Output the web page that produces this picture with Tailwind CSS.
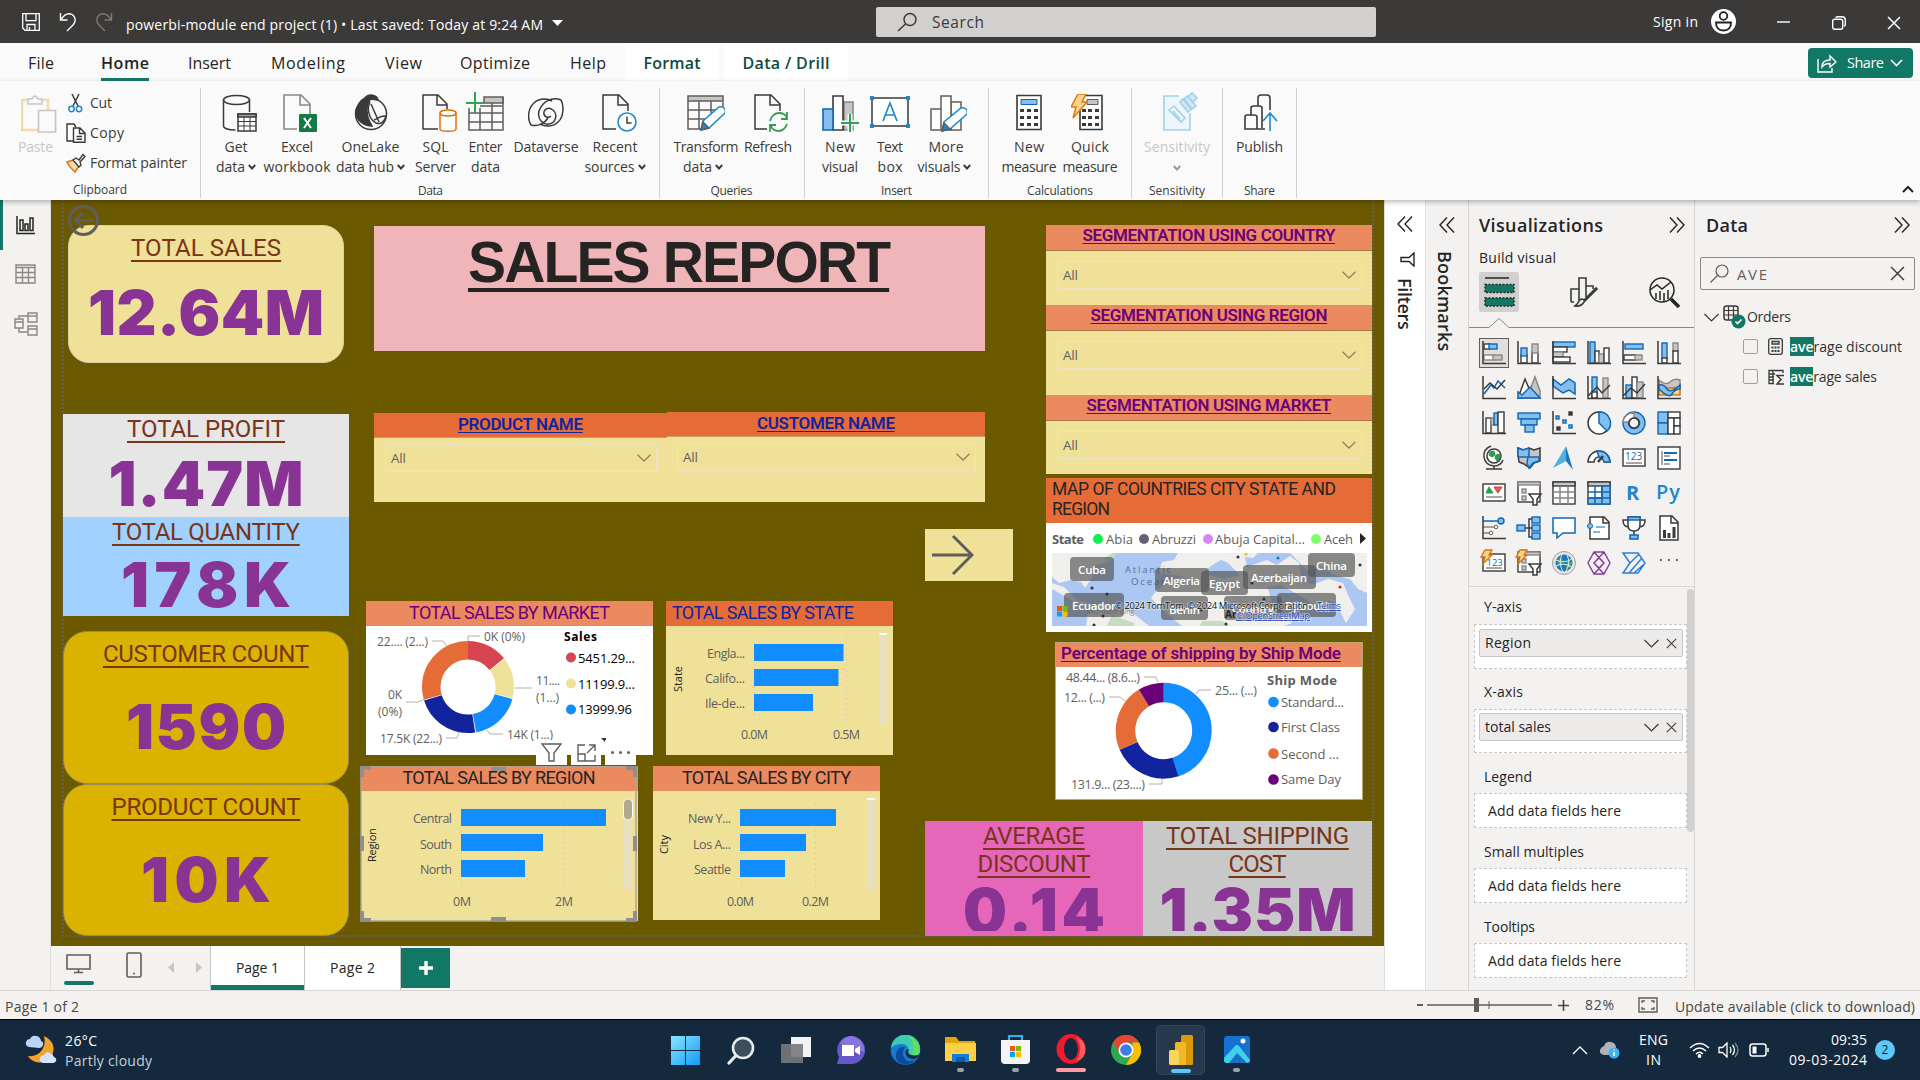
<!DOCTYPE html>
<html lang="en">
<head>
<meta charset="utf-8">
<title>powerbi-module end project (1)</title>
<script src="https://cdn.jsdelivr.net/npm/@tailwindcss/browser@4"></script>
</head>
<body class="w-[1920px] h-[1080px] overflow-hidden flex flex-col bg-[#f3f2f1] text-[#323130] font-['Open_Sans','Noto_Sans',sans-serif] text-[14px] leading-5 whitespace-nowrap">

<!-- Title bar -->
<header class="h-[43px] shrink-0 bg-[#3b3a39] text-white flex items-center">
  <svg class="ml-[22px] w-[18px] h-[18px]" viewBox="0 0 18 18" fill="none" stroke="#fff" stroke-width="1.3"><path d="M.7.7h16.6v16.6H3L.7 15zM4 .7v7h10v-7M5 17v-5.5h8V17M7.5 14v3"/></svg>
  <svg class="ml-[19px] w-[18px] h-[20px]" viewBox="0 0 18 20" fill="none" stroke="#fff" stroke-width="1.4"><path d="M1.5 1v7h7M2 7.5C5 3 9 .5 13 2.500c4 2.500 4 7.500 1 10.500L8 19"/></svg>
  <svg class="ml-[18px] w-[18px] h-[20px]" viewBox="0 0 18 20" fill="none" stroke="#7d7b79" stroke-width="1.400"><path d="M16.500 1v7h-7M16 7.500C13 3 9 .500 5 2.500c-4 2.500-4 7.500-1 10.500l6 6"/></svg>
  <div class="ml-[13px] mt-[6px] w-[419px] text-[14px]"><span data-w="417">powerbi-module end project (1) • Last saved: Today at 9:24 AM</span></div>
  <svg class="ml-[7px] mt-[3px] w-[11px] h-[6px]" viewBox="0 0 11 6"><path d="M0 0h11L5.500 6z" fill="#fff"/></svg>
  <div class="ml-[313px] w-[500px] h-[30px] bg-[#d2d0ce] rounded-[2px] flex items-center text-[#3b3a39] text-[15.500px]">
    <svg class="ml-[21px] w-[21px] h-[20px]" viewBox="0 0 21 20" fill="none" stroke="#3b3a39" stroke-width="1.500"><circle cx="13" cy="7.500" r="6"/><path d="M8.500 12L1 19"/></svg>
    <span class="ml-[14px]" data-w="52">Search</span>
  </div>
  <div class="ml-[277px] w-[46px] text-[14px]"><span data-w="45">Sign in</span></div>
  <svg class="ml-[12px] w-[25px] h-[25px]" viewBox="0 0 25 25"><circle cx="12.500" cy="12.500" r="12.500" fill="#fff"/><g fill="none" stroke="#222" stroke-width="1.800"><circle cx="12.500" cy="7" r="3.800"/><path d="M5 13.500h15c0 5-2.500 8-7.500 8s-7.500-3-7.500-8z"/></g></svg>
  <svg class="ml-[41px] w-[13px] h-[13px]" viewBox="0 0 13 13"><path d="M0 7h13" stroke="#fff" stroke-width="1.400"/></svg>
  <svg class="ml-[42px] mt-[2px] w-[14px] h-[14px]" viewBox="0 0 14 14" fill="none" stroke="#fff" stroke-width="1.400"><rect x=".7" y="3.300" width="10" height="10" rx="2"/><path d="M3.500 1.500Q4.500.700 6 .700h4q3.300 0 3.300 3.300v4q0 1.500-1 2.500"/></svg>
  <svg class="ml-[41px] mt-[2px] w-[14px] h-[14px]" viewBox="0 0 14 14"><path d="M1 1l12 12M13 1L1 13" stroke="#fff" stroke-width="1.500"/></svg>
</header>

<!-- Ribbon tabs -->
<nav class="h-[38px] shrink-0 bg-[#fafafa] flex text-[16px] text-[#252423]">
  <div class="ml-[28px] w-[73px] pt-[10px]"><span data-w="26">File</span></div>
  <div class="w-[87px] pt-[10px]"><div class="w-[48px] h-[28px] border-b-3 border-[#117865] font-semibold"><span data-w="48">Home</span></div></div>
  <div class="w-[83px] pt-[10px]"><span data-w="43">Insert</span></div>
  <div class="w-[114px] pt-[10px]"><span data-w="74">Modeling</span></div>
  <div class="w-[75px] pt-[10px]"><span data-w="37">View</span></div>
  <div class="w-[110px] pt-[10px]"><span data-w="70">Optimize</span></div>
  <div class="w-[55px] pt-[10px]"><span data-w="36">Help</span></div>
  <div class="w-[94px] bg-white flex justify-center pt-[10px] font-semibold text-[#0c4c40]"><span data-w="57">Format</span></div>
  <div class="ml-[5px] w-[124px] bg-white flex justify-center pt-[10px] font-semibold text-[#0c4c40]"><span data-w="87">Data / Drill</span></div>
  <div class="ml-[960px] mt-[5px] w-[105px] h-[30px] rounded-[4px] bg-[#117865] text-white text-[14.500px] flex items-center">
    <svg class="ml-[9px] w-[20px] h-[19px]" viewBox="0 0 20 19" fill="none" stroke="#fff" stroke-width="1.400"><path d="M1 5v13h14v-4M5 13c0-5 3-7 8-7V2l6 6-6 5V9.500C9 9.500 7 10 5 13z"/></svg>
    <span class="ml-[10px]" data-w="37">Share</span>
    <svg class="ml-[6px] w-[13px] h-[8px]" viewBox="0 0 13 8"><path d="M1 1l5.500 5.500L12 1" stroke="#fff" stroke-width="1.600" fill="none"/></svg>
  </div>
</nav>

<!-- Ribbon -->
<section class="h-[119px] shrink-0 bg-[#fafafa] flex text-[14px] text-[#3b3a39] relative z-10 shadow-[0_2px_5px_rgba(0,0,0,0.28)]">
  <!-- Clipboard -->
  <div class="w-[200px] pt-[7px] flex flex-col">
    <div class="flex h-[92px]">
      <div class="ml-[18px] w-[48px] pt-[7px] text-[#c8c6c4]">
        <svg class="ml-[3px] w-[36px] h-[38px]" viewBox="0 0 36 38" fill="none"><path d="M1 5h26v30H1z" stroke="#f6d9ab" stroke-width="2.500"/><path d="M7 9V4h4q3-6 6 0h4v5z" fill="#fafafa" stroke="#c8c6c4" stroke-width="1.500"/><path d="M17.500 15.500h17V37h-17z" fill="#fafafa" stroke="#c8c6c4" stroke-width="1.700"/></svg>
        <div class="mt-[4px]"><span data-w="35">Paste</span></div>
      </div>
      <div class="flex flex-col gap-[10px] pt-[5px]">
        <div class="flex items-center h-5"><svg class="ml-[1px] w-[18px] h-[20px]" viewBox="0 0 18 20" fill="none"><path d="M5 1l6 12M12 1L6 13" stroke="#3b3a39" stroke-width="1.500"/><circle cx="4.500" cy="16" r="2.700" stroke="#1e87cd" stroke-width="1.500"/><circle cx="12" cy="16" r="2.700" stroke="#1e87cd" stroke-width="1.500"/></svg><span class="ml-[5px]" data-w="22">Cut</span></div>
        <div class="flex items-center h-5"><svg class="w-[20px] h-[20px]" viewBox="0 0 20 20" fill="none" stroke="#3b3a39" stroke-width="1.400"><path d="M7 18H1V1h7l2 3"/><path d="M7.500 5h6.500l5 5v9.300H7.500zM13.500 5v5.500H19M10.500 13.500h5.500M10.500 16.300h5.500"/></svg><span class="ml-[4px]" data-w="34">Copy</span></div>
        <div class="flex items-center h-5"><svg class="w-[20px] h-[20px]" viewBox="0 0 20 20" fill="none"><path d="M1 9l6-2 6 6-4 6C6 16 3 14 1 9z" fill="#f8d9ae" stroke="#d8730c" stroke-width="1.500"/><path d="M7 7l3-2 3 2 4-5.500 2 2L14 9l1 3-2 2z" fill="#fafafa" stroke="#3b3a39" stroke-width="1.400"/></svg><span class="ml-[4px]" data-w="97">Format painter</span></div>
      </div>
    </div>
    <div class="flex justify-center text-[12px] leading-[20px] mt-[1px]"><span data-w="54">Clipboard</span></div>
  </div>
  <!-- Data -->
  <div class="my-[7px] mb-[2px] w-[460px] border-l border-[#d2d0ce] pt-0">
    <div class="flex h-[92px] pt-[6px]">
      <div class="ml-[9px] w-[52px] flex flex-col items-center">
        <svg class="ml-[7px] w-[36px] h-[38px] mb-[5px]" viewBox="0 0 36 38" fill="none" stroke="#3b3a39" stroke-width="1.500"><ellipse cx="14.500" cy="6" rx="13" ry="4.500"/><path d="M1.500 6v26c0 2 4 4 12 4M27.500 6v12"/><path d="M16 20h18v17H16z" fill="#fff"/><path d="M16 20h18v3H16z" fill="#a19f9d"/><path d="M16 27.500h18M16 32h18M22 23v14M28 23v14" stroke-width="1"/></svg>
        <span data-w="23">Get</span><div class="flex items-center"><span data-w="29">data</span><svg class="ml-[3px] w-[8px] h-[6px]" viewBox="0 0 8 6"><use href="#cv"/></svg></div>
      </div>
      <div class="w-[70px] flex flex-col items-center">
        <svg class="ml-[4px] w-[36px] h-[38px] mb-[5px]" viewBox="0 0 36 38" fill="none"><path d="M16 35H3V1h17l9 9v10M19 1v10h10" stroke="#8a8886" stroke-width="1.600"/><rect x="18" y="20" width="18" height="18" rx="1" fill="#107c41"/><path d="M23 24l7 10M30 24l-7 10" stroke="#fff" stroke-width="2"/></svg>
        <span data-w="32">Excel</span><span data-w="67">workbook</span>
      </div>
      <div class="w-[77px] flex flex-col items-center">
        <svg class="w-[36px] h-[38px] mb-[5px]" viewBox="0 0 36 38" fill="none" stroke="#3b3a39" stroke-width="1.500"><circle cx="18" cy="20" r="15.500"/><path d="M12 4C16-1 24 1 25 6L18 5c-6 6-5 18 1 27-8 0-16-6-16-13S8 6 12 4z" fill="#3b3a39"/><path d="M17 8c-4 8 0 18 6 21 5 2 9-2 10-7-6-1-8 3-12 4" fill="#fafafa"/><path d="M18 10l8 18"/></svg>
        <span data-w="58">OneLake</span><div class="flex items-center"><span data-w="58">data hub</span><svg class="ml-[3px] w-[8px] h-[6px]" viewBox="0 0 8 6"><use href="#cv"/></svg></div>
      </div>
      <div class="w-[53px] flex flex-col items-center">
        <svg class="ml-[6px] w-[36px] h-[38px] mb-[5px]" viewBox="0 0 36 38" fill="none" stroke="#3b3a39" stroke-width="1.500"><path d="M17 35H2V1h15l9 9v5M16 1v10h10"/><g stroke="#d8730c" fill="#fff"><path d="M19 19v16c0 3 16 3 16 0V19"/><ellipse cx="27" cy="19" rx="8" ry="3"/></g></svg>
        <span data-w="26">SQL</span><span data-w="41">Server</span>
      </div>
      <div class="w-[47px] flex flex-col items-center">
        <svg class="mr-[2px] w-[38px] h-[38px] mb-[5px] overflow-visible" viewBox="0 0 38 38" fill="none" stroke="#605e5c" stroke-width="1.500"><path d="M18 3h19v6H18z" fill="#c8c6c4"/><path d="M3 14v22h34V3M3 19h34M3 28h34M14 14v22M26 9v27M14 12h22" /><path d="M9-2v22M0 9h18" stroke="#2ea44f" stroke-width="2"/></svg>
        <span data-w="34">Enter</span><span data-w="29">data</span>
      </div>
      <div class="w-[74px] flex flex-col items-center">
        <svg class="w-[36px] h-[38px] mb-[5px]" viewBox="0 0 36 38" fill="none" stroke="#3b3a39" stroke-width="1.500"><path d="M33 6C24 2 14 8 11 17c-2 8 4 14 10 13 7-1 9-10 4-14s-10 0-9 4 5 4 7 2M33 6c3 5 3 17-3 22-5 5-13 5-18 2M3 31c-4-6-3-17 3-22C11 4 19 4 24 7M3 31c7 2 14-2 17-7"/></svg>
        <span data-w="65">Dataverse</span>
      </div>
      <div class="ml-[-2px] w-[68px] flex flex-col items-center">
        <svg class="ml-[7px] w-[36px] h-[38px] mb-[5px]" viewBox="0 0 36 38" fill="none"><path d="M15 35H2V1h16l9 9v7M17 1v10h10" stroke="#3b3a39" stroke-width="1.500"/><circle cx="26" cy="28" r="9" fill="#fff" stroke="#1e87cd" stroke-width="1.600"/><path d="M26 22.500V29h4.500" stroke="#3b3a39" stroke-width="1.500"/></svg>
        <span data-w="45">Recent</span><div class="flex items-center"><span data-w="50">sources</span><svg class="ml-[3px] w-[8px] h-[6px]" viewBox="0 0 8 6"><use href="#cv"/></svg></div>
      </div>
    </div>
    <div class="flex justify-center text-[12px] mt-[1px]"><span data-w="25">Data</span></div>
  </div>
  <!-- Queries -->
  <div class="my-[7px] mb-[2px] w-[144px] border-l border-[#d2d0ce] -ml-px mr-px">
    <div class="flex h-[92px] pt-[6px]">
      <div class="ml-[11px] w-[70px] flex flex-col items-center">
        <svg class="w-[38px] h-[38px] mb-[5px]" viewBox="0 0 38 38" fill="none" stroke="#605e5c" stroke-width="1.500"><path d="M1 2h35v5H1z" fill="#c8c6c4"/><path d="M36 8v7M1 7v28h14M1 16h27M1 25h20M12 7v28M24 7v12"/><path d="M14 36l2-9 16-14q3-1 5 1t1 5L22 34z" fill="#fff" stroke="#1e87cd"/><path d="M14 36l2-8 6 6z" fill="#1e87cd"/></svg>
        <span data-w="65">Transform</span><div class="mr-[6px] flex items-center"><span data-w="29">data</span><svg class="ml-[3px] w-[8px] h-[6px]" viewBox="0 0 8 6"><use href="#cv"/></svg></div>
      </div>
      <div class="w-[54px] flex flex-col items-center">
        <svg class="ml-[6px] w-[34px] h-[38px] mb-[5px]" viewBox="0 0 34 38" fill="none"><path d="M13 35H1V1h16l9 9v7M16 1v10h10" stroke="#3b3a39" stroke-width="1.500"/><g stroke="#3c9b52" stroke-width="1.800"><path d="M16 27c1-5 5-8 9-8s7 2 8 5M33 18v7h-6M33 30c-1 4-5 7-8 7-4 0-7-2-8-5M16 38v-7h6"/></g></svg>
        <span data-w="48">Refresh</span>
      </div>
    </div>
    <div class="flex justify-center text-[12px] mt-[1px]"><span data-w="42">Queries</span></div>
  </div>
  <!-- Insert -->
  <div class="my-[7px] mb-[2px] w-[184px] border-l border-[#d2d0ce]">
    <div class="flex h-[92px] pt-[6px]">
      <div class="ml-[10px] w-[50px] flex flex-col items-center">
        <svg class="w-[36px] h-[38px] mb-[5px] overflow-visible" viewBox="0 0 36 38" fill="none" stroke="#3b3a39" stroke-width="1.600"><path d="M22 8h9v28h-9z" fill="#c8c6c4" stroke="#8a8886"/><path d="M11 2h10v34H11z" fill="#fff"/><path d="M1 15h10v21H1z" fill="#83beec" stroke="#1267b4"/><path d="M28 20v18M19 29h18" stroke="#fafafa" stroke-width="5"/><path d="M28 20v18M19 29h18" stroke="#2ea44f" stroke-width="2"/></svg>
        <span data-w="30">New</span><span data-w="36">visual</span>
      </div>
      <div class="w-[50px] flex flex-col items-center">
        <svg class="w-[40px] h-[38px] mb-[5px]" viewBox="0 0 40 38" fill="none"><path d="M2 4h36v28H2z" fill="#fff" stroke="#3b3a39" stroke-width="1.500"/><g fill="#1e87cd"><path d="M0 2h4v4H0zM36 2h4v4h-4zM0 30h4v4H0zM36 30h4v4h-4z"/></g><path d="M13 27l7-18 7 18M15.500 21h9" stroke="#1e87cd" stroke-width="1.700"/></svg>
        <span data-w="26">Text</span><span data-w="25">box</span>
      </div>
      <div class="w-[62px] flex flex-col items-center">
        <svg class="ml-[4px] w-[38px] h-[38px] mb-[5px]" viewBox="0 0 38 38" fill="none" stroke="#605e5c" stroke-width="1.500"><path d="M22 8h10v28H22z" fill="#fff"/><path d="M12 2h10v34H12zM2 15h10v21H2z" fill="#fff"/><path d="M13 37l2-9 17-14q3-1 5 1t1 5L21 35z" fill="#fff" stroke="#1e87cd"/><path d="M13 37l2-8 6 6z" fill="#1e87cd"/></svg>
        <span data-w="35">More</span><div class="mr-[3px] flex items-center"><span data-w="43">visuals</span><svg class="ml-[3px] w-[8px] h-[6px]" viewBox="0 0 8 6"><use href="#cv"/></svg></div>
      </div>
    </div>
    <div class="flex justify-center text-[12px] mt-[1px]"><span data-w="31">Insert</span></div>
  </div>
  <!-- Calculations -->
  <div class="my-[7px] mb-[2px] w-[143px] border-l border-[#d2d0ce]">
    <div class="flex h-[92px] pt-[6px]">
      <div class="ml-[10px] w-[60px] flex flex-col items-center">
        <svg class="w-[26px] h-[38px] mb-[5px]" viewBox="0 0 26 38"><path d="M1 1.500h24v34H1z" fill="#fff" stroke="#3b3a39" stroke-width="1.600"/><path d="M5 5.500h16v5H5z" fill="#83beec" stroke="#1267b4"/><path d="M4 15h4v3H4zM11 15h4v3h-4zM18 15h4v3h-4zM4 22h4v3H4zM11 22h4v3h-4zM18 22h4v3h-4zM4 29h4v3H4zM11 29h4v3h-4zM18 29h4v3h-4z" fill="#3b3a39"/></svg>
        <span data-w="30">New</span><span data-w="55">measure</span>
      </div>
      <div class="w-[62px] flex flex-col items-center">
        <svg class="mr-[7px] w-[32px] h-[38px] mb-[5px]" viewBox="0 0 32 38"><path d="M9 1.500h22v34H9z" fill="#fff" stroke="#3b3a39" stroke-width="1.600"/><path d="M16 5.500h11v5H16z" fill="#c8c6c4" stroke="#605e5c"/><path d="M11 15h4v3h-4zM17 15h4v3h-4zM24 15h4v3h-4zM11 22h4v3h-4zM17 22h4v3h-4zM24 22h4v3h-4zM11 29h4v3h-4zM17 29h4v3h-4zM24 29h4v3h-4z" fill="#3b3a39"/><path d="M7 0h8l-4 8h5L2 24l3-11H0z" fill="#fbd38d" stroke="#e07b0a" stroke-width="1.500"/></svg>
        <span data-w="38">Quick</span><span data-w="55">measure</span>
      </div>
    </div>
    <div class="flex justify-center text-[12px] mt-[1px]"><span data-w="66">Calculations</span></div>
  </div>
  <!-- Sensitivity -->
  <div class="my-[7px] mb-[2px] w-[91px] border-l border-[#d2d0ce]">
    <div class="flex h-[92px] pt-[6px]">
      <div class="w-[90px] flex flex-col items-center text-[#c8c6c4]">
        <svg class="ml-[5px] w-[34px] h-[38px] mb-[5px] overflow-visible" viewBox="0 0 34 38" fill="none" stroke="#a5d0ea" stroke-width="1.600"><path d="M16 2H1v34h26V19" fill="#eef6fb"/><path d="M6 16l5-4 11 12-4 4zM10 17l7 8"/><path d="M17 8l3-3 8 10-3 3zM21 5l3-3 9 10-4 3zM25 3l4-4 5 5-4 4z" fill="#d3e8f4"/></svg>
        <span data-w="66">Sensitivity</span><svg class="mt-[8px] w-[8px] h-[6px] opacity-50" viewBox="0 0 8 6"><use href="#cv"/></svg>
      </div>
    </div>
    <div class="flex justify-center text-[12px] mt-[1px]"><span data-w="56">Sensitivity</span></div>
  </div>
  <!-- Share -->
  <div class="my-[7px] mb-[2px] w-[75px] border-x border-[#d2d0ce]">
    <div class="flex h-[92px] pt-[6px]">
      <div class="w-[73px] flex flex-col items-center">
        <svg class="ml-[3px] w-[34px] h-[38px] mb-[5px]" viewBox="0 0 34 38" fill="none" stroke="#3b3a39" stroke-width="1.600"><path d="M14 12V4q0-3 3-3h6q3 0 3 3v12M7 21v-7q0-2 3-2h5q3 0 3 2v20M1 34V23q0-2 2-2h7q3 0 3 2v12H1zM13 35h8"/><path d="M26 37V19M19 27l7-8 7 8" stroke="#1e87cd"/></svg>
        <span data-w="47">Publish</span>
      </div>
    </div>
    <div class="flex justify-center text-[12px] mt-[1px]"><span data-w="31">Share</span></div>
  </div>
  <svg class="ml-auto mr-[6px] mt-[104px] w-[12px] h-[8px]" viewBox="0 0 12 8"><path d="M1 7l5-5 5 5" stroke="#252423" stroke-width="2" fill="none"/></svg>
  <svg class="hidden"><symbol id="cv" viewBox="0 0 8 6"><path d="M.8 1L4 4.500 7.200 1" stroke="#3b3a39" stroke-width="1.900" fill="none"/></symbol></svg>
</section>

<!-- Workspace -->
<main class="flex h-[790px] shrink-0">
  <aside class="w-[51px] flex flex-col border-r border-[#e1dfdd]">
    <div class="h-[50px] border-l-3 border-[#117865] pt-[16px] pl-[13px]"><svg class="w-[19px] h-[19px]" viewBox="0 0 19 19" fill="none" stroke="#252423" stroke-width="1.500"><path d="M1 0v17.500h18M4 4h3v10.500H4zM9 8h3v6.500H9zM14 2h3v12.500h-3z"/></svg></div>
    <svg class="mt-[14px] ml-[15px] w-[21px] h-[20px]" viewBox="0 0 21 20" fill="none" stroke="#8a8886" stroke-width="1.400"><path d="M1 1h19v18H1zM1 3.500h19M1 8.500h19M1 13.500h19M7.500 4v15M13.500 4v15"/></svg>
    <svg class="mt-[28px] ml-[14px] w-[24px] h-[24px]" viewBox="0 0 24 24" fill="none" stroke="#8a8886" stroke-width="1.400"><path d="M1 7h8v9H1zM1 10h8M14 1h9v9h-9zM14 4h9M14 14h9v9h-9zM14 17h9M5 7V4h9M5 16v4h9"/></svg>
  </aside>

  <div class="flex flex-col w-[1333px]">
    <!-- Report canvas -->
    <div class="relative h-[746px] bg-[#6b5900] flex">
      <div class="absolute left-[11px] right-[10px] top-0 bottom-[9px] border-2 border-t-0 border-dotted border-[#605e6a]"></div>
      <svg class="absolute z-10 left-[17px] top-[5px] w-[31px] h-[31px]" viewBox="0 0 31 31" fill="none" stroke="#605e5c" stroke-width="3"><circle cx="15.500" cy="15.500" r="14"/><path d="M25 15.500H8M15 8l-7.500 7.500L15 23"/></svg>

      <!-- KPI cards -->
      <div class="relative ml-[12px] w-[286px] flex flex-col text-center font-['Roboto',sans-serif] text-[24px] leading-[28px] text-[#7a3417]">
        <div class="mt-[25px] ml-[5px] w-[276px] h-[138px] rounded-[21px] border border-[#d8cfa8] bg-[#f0e199] pt-[8px]"><span class="underline decoration-2 underline-offset-[4px]" data-w="150">TOTAL SALES</span><div class="mt-[20px] font-['Inter',sans-serif] font-black text-[62px] leading-[62px] text-[#893395]"><span data-w="236">12.64M</span></div></div>
        <div class="mt-[51px] h-[103px] bg-[#e6e6e6] pt-[1px]"><span class="underline decoration-2 underline-offset-[4px]" data-w="158">TOTAL PROFIT</span><div class="mt-[10px] font-['Inter',sans-serif] font-black text-[62px] leading-[62px] text-[#893395]"><span data-w="195">1.47M</span></div></div>
        <div class="h-[99px] bg-[#a0d1ff] pt-[1px]"><span class="underline decoration-2 underline-offset-[4px]" data-w="188">TOTAL QUANTITY</span><div class="mt-[8px] font-['Inter',sans-serif] font-black text-[62px] leading-[62px] text-[#893395]"><span data-w="170">178K</span></div></div>
        <div class="mt-[15px] h-[153px] rounded-[24px] border border-[#9a8a50] bg-[#d9b300] pt-[8px]"><span class="underline decoration-2 underline-offset-[4px]" data-w="206">CUSTOMER COUNT</span><div class="mt-[28px] font-['Inter',sans-serif] font-black text-[62px] leading-[62px] text-[#893395]"><span data-w="160">1590</span></div></div>
        <div class="h-[152px] rounded-[24px] border border-[#9a8a50] bg-[#d9b300] pt-[8px]"><span class="underline decoration-2 underline-offset-[4px]" data-w="189">PRODUCT COUNT</span><div class="mt-[28px] font-['Inter',sans-serif] font-black text-[62px] leading-[62px] text-[#893395]"><span data-w="130">10K</span></div></div>
      </div>

      <!-- Middle column -->
      <div class="relative ml-[11px] w-[653px] flex flex-col">
        <div class="mt-[26px] ml-[14px] w-[611px] h-[125px] bg-[#efb5b9] text-center font-['Liberation_Sans',sans-serif] font-bold text-[57px] leading-[64px] text-[#252423] pt-[4px]"><span class="underline decoration-[4px] underline-offset-[6px]" data-w="423">SALES REPORT</span></div>
        <div class="mt-[61px] ml-[14px] w-[611px] h-[90px] flex">
          <div class="mt-px w-[293px] bg-[#f0e199]">
            <div class="h-[25px] bg-[#e66c37] border-b border-[#c9a06a] text-center font-['Roboto',sans-serif] font-semibold text-[17px] leading-[23px] text-[#12239e]"><span class="underline underline-offset-2" data-w="125">PRODUCT NAME</span></div>
            <div class="ml-[11px] mt-[6px] w-[272px] h-[28px] border border-[#ece3c3] flex items-center text-[13.500px] text-[#605e5c] px-[5px]"><span data-w="15">All</span><svg class="ml-auto w-[14px] h-[8px]" viewBox="0 0 14 8"><use href="#cd"/></svg></div>
          </div>
          <div class="w-[318px] bg-[#f0e199]">
            <div class="h-[25px] bg-[#e66c37] border-b border-[#c9a06a] text-center font-['Roboto',sans-serif] font-semibold text-[17px] leading-[23px] text-[#12239e]"><span class="underline underline-offset-2" data-w="138">CUSTOMER NAME</span></div>
            <div class="ml-[10px] mt-[6px] w-[299px] h-[28px] border border-[#ece3c3] flex items-center text-[13.500px] text-[#605e5c] px-[5px]"><span data-w="15">All</span><svg class="ml-auto w-[14px] h-[8px]" viewBox="0 0 14 8"><use href="#cd"/></svg></div>
          </div>
        </div>
        <div class="mt-[27px] ml-[565px] w-[88px] h-[52px] bg-[#f0e199] flex items-center pl-[7px]"><svg class="w-[42px] h-[42px]" viewBox="0 0 42 42" fill="none" stroke="#605e5c" stroke-width="3"><path d="M0 21h39M21 2l19 19-19 19"/></svg></div>
        <div class="mt-[20px] ml-[6px] flex gap-[13px]">
          <!-- Sales by market -->
          <div class="w-[287px] h-[154px] bg-white flex flex-col">
            <div class="h-[25px] bg-[#eb895f] text-center font-['Roboto',sans-serif] text-[18px] leading-[23px] text-[#6b007b]"><span data-w="201">TOTAL SALES BY MARKET</span></div>
            <svg class="w-[287px] h-[129px]" viewBox="366 626 287 129" font-size="12" fill="#605e5c">
              <g fill="none" stroke-width="18.500" transform="rotate(-90 468 687)">
                <circle cx="468" cy="687" r="36.750" stroke="#d64550" pathLength="100" stroke-dasharray="14.300 85.700"/>
                <circle cx="468" cy="687" r="36.750" stroke="#f0e199" pathLength="100" stroke-dasharray="14.300 85.700" stroke-dashoffset="-14.600"/>
                <circle cx="468" cy="687" r="36.750" stroke="#118dff" pathLength="100" stroke-dasharray="18 82" stroke-dashoffset="-29.200"/>
                <circle cx="468" cy="687" r="36.750" stroke="#12239e" pathLength="100" stroke-dasharray="22.700 77.300" stroke-dashoffset="-47.500"/>
                <circle cx="468" cy="687" r="36.750" stroke="#e66c37" pathLength="100" stroke-dasharray="29.500 70.500" stroke-dashoffset="-70.500"/>
              </g>
              <g fill="none" stroke="#b3b0ad"><path d="M432 641h11l4 5M468 641v-5h12M515 688h17M406 702h12l7-3M446 738h11l2-6M487 730l3 4h13"/></g>
              <text x="377" y="646" textLength="51">22.... (2...)</text><text x="484" y="641" textLength="41">0K (0%)</text>
              <text x="536" y="685" textLength="24">11....</text><text x="536" y="702" textLength="23">(1...)</text>
              <text x="388" y="699" textLength="14">0K</text><text x="378" y="716" textLength="24">(0%)</text>
              <text x="380" y="743" textLength="62">17.5K (22...)</text><text x="507" y="739" textLength="46">14K (1...)</text>
              <text x="564" y="641" textLength="33" font-weight="700" fill="#000">Sales</text>
              <circle cx="571" cy="657.500" r="5" fill="#d64550"/><circle cx="571" cy="683.500" r="5" fill="#f0e199"/><circle cx="571" cy="709.500" r="5" fill="#118dff"/>
              <g fill="#000" font-size="13"><text x="578" y="663" textLength="57">5451.29...</text><text x="578" y="689" textLength="57">11199.9...</text><text x="578" y="714" textLength="54">13999.96</text></g>
              <path d="M601 738h5v5z" fill="#333"/>
            </svg>
          </div>
          <!-- Sales by state -->
          <div class="w-[227px] h-[154px] bg-[#f0e199] flex flex-col">
            <div class="h-[25px] pl-[6px] bg-[#e66c37] font-['Roboto',sans-serif] text-[18px] leading-[23px] text-[#12239e]"><span data-w="182">TOTAL SALES BY STATE</span></div>
            <svg class="w-[227px] h-[129px]" viewBox="666 626 227 129" font-size="12.500" fill="#605e5c">
              <path d="M754.500 637v88M846.500 637v88" stroke="#cfc8b4" stroke-dasharray="1.500 4"/>
              <path d="M754 644h89.500v17H754zM754 669h84.500v17H754zM754 694h59v17h-59z" fill="#118dff"/>
              <text x="707" y="658" textLength="38">Engla...</text><text x="705" y="683" textLength="40">Califo...</text><text x="705" y="708" textLength="40">Ile-de...</text>
              <text x="741" y="739" textLength="27">0.0M</text><text x="833" y="739" textLength="27">0.5M</text>
              <text transform="translate(681.500 692) rotate(-90)" font-size="11" fill="#252423" textLength="26">State</text>
              <rect x="879" y="633" width="8" height="92" rx="4" fill="#e8dfbe"/><rect x="879" y="633" width="8" height="2" rx="1" fill="#fff"/>
            </svg>
          </div>
        </div>
        <div class="mt-[11px] ml-[1px] flex gap-[15px] relative">
          <!-- Sales by region, selected -->
          <div class="w-[277px] h-[155px] bg-[#f0e199] flex flex-col relative">
            <div class="h-[25px] bg-[#eb895f] text-center font-['Roboto',sans-serif] text-[18px] leading-[23px] pr-[1px] text-[#252423]"><span data-w="193">TOTAL SALES BY REGION</span></div>
            <svg class="w-[277px] h-[129px]" viewBox="361 791 277 129" font-size="12.500" fill="#605e5c">
              <path d="M461.500 803v88M564.500 803v88" stroke="#cfc8b4" stroke-dasharray="1.500 4"/>
              <path d="M461 809h145v17H461zM461 834h82v17h-82zM461 860h64v17h-64z" fill="#118dff"/>
              <text x="413" y="823" textLength="39">Central</text><text x="420" y="849" textLength="32">South</text><text x="420" y="874" textLength="32">North</text>
              <text x="453" y="906" textLength="18">0M</text><text x="555" y="906" textLength="18">2M</text>
              <text transform="translate(376 862) rotate(-90)" font-size="11" fill="#252423" textLength="34">Region</text>
              <rect x="624" y="799" width="8" height="91" rx="4" fill="#e8dfbe"/><rect x="623.500" y="799" width="9" height="21" rx="4.500" fill="#b1a98a" stroke="#fff"/>
            </svg>
            <svg class="absolute left-[-1px] top-0 w-[277px] h-[156px]" viewBox="0 0 277 156" fill="none" stroke="#8f8f8f"><path d="M1 1h275v154H1z" stroke="#a8a59a" stroke-width="1.500"/><path d="M2 11V2h9M266 2h9v9M275 145v9h-9M11 154H2v-9M131 3h15M131 153h15M2 70v15M275 70v15" stroke-width="4"/></svg>
            <div class="absolute right-[2px] -top-[26px] flex gap-[4px]">
              <div class="w-[31px] h-[25px] bg-white flex justify-center items-center"><svg class="w-[21px] h-[19px]" viewBox="0 0 21 19" fill="none" stroke="#605e5c" stroke-width="1.400"><path d="M1 1h19l-7 9v8H8v-8z"/></svg></div>
              <div class="w-[30px] h-[25px] bg-white flex justify-center items-center"><svg class="w-[19px] h-[18px]" viewBox="0 0 19 18" fill="none" stroke="#605e5c" stroke-width="1.400"><path d="M8 1H1v16h17v-6M1 10h7v7M10 9l8-8M12 1h6v6"/></svg></div>
              <div class="w-[31px] h-[25px] bg-white flex justify-center items-center gap-[5px]"><i class="size-[3px] rounded-full bg-[#605e5c]"></i><i class="size-[3px] rounded-full bg-[#605e5c]"></i><i class="size-[3px] rounded-full bg-[#605e5c]"></i></div>
            </div>
          </div>
          <!-- Sales by city -->
          <div class="w-[227px] h-[154px] bg-[#f0e199] flex flex-col">
            <div class="h-[25px] bg-[#eb895f] text-center font-['Roboto',sans-serif] text-[18px] leading-[23px] text-[#252423]"><span data-w="169">TOTAL SALES BY CITY</span></div>
            <svg class="w-[227px] h-[129px]" viewBox="653 791 227 129" font-size="12.500" fill="#605e5c">
              <path d="M741.500 803v88M815.500 803v88" stroke="#cfc8b4" stroke-dasharray="1.500 4"/>
              <path d="M740 809h96v17h-96zM740 834h66v17h-66zM740 860h45v17h-45z" fill="#118dff"/>
              <text x="688" y="823" textLength="43">New Y...</text><text x="693" y="849" textLength="38">Los A...</text><text x="694" y="874" textLength="37">Seattle</text>
              <text x="727" y="906" textLength="27">0.0M</text><text x="802" y="906" textLength="27">0.2M</text>
              <text transform="translate(667.500 854) rotate(-90)" font-size="11" fill="#252423" textLength="19">City</text>
              <rect x="867" y="798" width="8" height="92" rx="4" fill="#e8dfbe"/><rect x="867" y="798" width="8" height="2" rx="1" fill="#fff"/>
            </svg>
          </div>
        </div>
      </div>

      <!-- Right column -->
      <div class="relative ml-[33px] w-[326px] pt-[25px] flex flex-col items-end">
        <div class="w-[326px] h-[80px] bg-[#f0e199]">
          <div class="h-[26px] bg-[#eb895f] border-b border-[#a97546] text-center font-['Roboto',sans-serif] font-semibold text-[17px] leading-[20px] text-[#6b007b]"><span class="underline underline-offset-2" data-w="253">SEGMENTATION USING COUNTRY</span></div>
          <div class="ml-[11px] mt-[10px] w-[305px] h-[28px] border border-[#ece3c3] flex items-center text-[13.500px] text-[#605e5c] px-[5px]"><span data-w="15">All</span><svg class="ml-auto w-[14px] h-[8px]" viewBox="0 0 14 8"><use href="#cd"/></svg></div>
        </div>
        <div class="w-[326px] h-[90px] bg-[#f0e199]">
          <div class="h-[26px] bg-[#eb895f] border-b border-[#a97546] text-center font-['Roboto',sans-serif] font-semibold text-[17px] leading-[20px] text-[#6b007b]"><span class="underline underline-offset-2" data-w="237">SEGMENTATION USING REGION</span></div>
          <div class="ml-[11px] mt-[10px] w-[305px] h-[28px] border border-[#ece3c3] flex items-center text-[13.500px] text-[#605e5c] px-[5px]"><span data-w="15">All</span><svg class="ml-auto w-[14px] h-[8px]" viewBox="0 0 14 8"><use href="#cd"/></svg></div>
        </div>
        <div class="w-[326px] h-[79px] bg-[#f0e199]">
          <div class="h-[26px] bg-[#eb895f] border-b border-[#a97546] text-center font-['Roboto',sans-serif] font-semibold text-[17px] leading-[20px] text-[#6b007b]"><span class="underline underline-offset-2" data-w="245">SEGMENTATION USING MARKET</span></div>
          <div class="ml-[11px] mt-[10px] w-[305px] h-[28px] border border-[#ece3c3] flex items-center text-[13.500px] text-[#605e5c] px-[5px]"><span data-w="15">All</span><svg class="ml-auto w-[14px] h-[8px]" viewBox="0 0 14 8"><use href="#cd"/></svg></div>
        </div>
        <!-- Map -->
        <div class="mt-[4px] w-[326px] h-[154px] bg-white">
          <div class="h-[45px] pl-[6px] pt-[1px] bg-[#e66c37] font-['Roboto',sans-serif] text-[17.500px] leading-[20px] text-[#252423]"><div><span data-w="284">MAP OF COUNTRIES CITY STATE AND</span></div><div><span data-w="58">REGION</span></div></div>
          <svg class="w-[326px] h-[109px]" viewBox="1046 523 326 109" font-size="13" fill="#605e5c">
            <text x="1052" y="544" font-weight="700" textLength="32">State</text>
            <circle cx="1098" cy="539" r="5" fill="#0ef04f"/><text x="1106" y="544" textLength="27">Abia</text>
            <circle cx="1144" cy="539" r="5" fill="#6b6075"/><text x="1152" y="544" textLength="44">Abruzzi</text>
            <circle cx="1208" cy="539" r="5" fill="#d38aef"/><text x="1215" y="544" textLength="90">Abuja Capital...</text>
            <circle cx="1316" cy="539" r="5" fill="#7dff6a"/><text x="1324" y="544" textLength="29">Aceh</text>
            <path d="M1360 533v11l6-5.500z" fill="#252423"/>
            <svg x="1052" y="553" width="315" height="73" viewBox="0 0 315 73">
              <path d="M0 0h315v73H0z" fill="#abc7f2"/>
              <g fill="#f0efeb"><path d="M0 0h64l-6 8-15 5-3 12-7 10-4-6-10-2-12 3-7-6zM0 30l12 4 14 14 12 2 6 6-14-3L0 36zM36 60l12-9 18 2 16 8 15 12H34zM105 37l15-10 10-3 20-4 22 6 18-4 18 3 6 3 6 22 20 20-8 3H130l-22-18-9-10zM107 20l3-11 12-2 4-7h80l-5 5-8-1 3 14-8 4-12-12-7-3-10 6-10 8-12 3zM195 22l2-9 18-6 10 5 13-9 9 7 2 14 10 8 17-6 15 4 5 12 7 14-9 14-10-20-8-2-11 8-10-9-15-9-12-6-12 2zM238 0h77v40l-9-4-8-10-16-4-12-8-14 4z"/></g>
              <g fill="#c5dcc0"><path d="M60 0h4l-8 9-4-3zM150 68h20l8 5h-30zM60 62l22 8v3H55z"/></g>
              <g fill="#5370ad" font-size="9.500"><text x="73" y="20" textLength="46">Atlantic</text><text x="79" y="32" textLength="36">Ocean</text></g>
              <text x="35" y="61" font-size="7" fill="#7890aa">Microsoft Bing</text>
              <g fill="#555" fill-opacity=".68"><rect x="18" y="4" width="44" height="24" rx="4"/><rect x="103" y="15" width="54" height="24" rx="4"/><rect x="149" y="18" width="47" height="24" rx="4"/><rect x="191" y="12" width="73" height="24" rx="4"/><rect x="256" y="0" width="47" height="24" rx="4"/><rect x="12" y="40" width="60" height="24" rx="4"/><rect x="109" y="43" width="47" height="24" rx="4"/><rect x="172" y="43" width="58" height="24" rx="4"/><rect x="225" y="40" width="59" height="24" rx="4"/></g>
              <g fill="#fff" font-size="11.500" font-weight="600"><text x="26" y="21" textLength="28">Cuba</text><text x="111" y="32" textLength="37">Algeria</text><text x="157" y="35" textLength="31">Egypt</text><text x="199" y="29" textLength="56">Azerbaijan</text><text x="264" y="17" textLength="31">China</text><text x="20" y="57" textLength="44">Ecuador</text><text x="117" y="61" textLength="31">Benin</text><text x="180" y="60" textLength="42">Country</text><text x="233" y="57" textLength="43">Djibouti</text></g>
              <text x="173" y="65" font-size="10" font-weight="700" fill="#222">Ar</text>
              <g fill="#e8b923"><circle cx="194" cy="1" r="1.500"/></g><g fill="#234"><circle cx="186" cy="4" r="1.500"/><circle cx="226" cy="5" r="1.500" fill="#17a"/><circle cx="308" cy="12" r="1.500"/><circle cx="40" cy="35" r="1.500"/><circle cx="55" cy="41" r="1.500"/><circle cx="51" cy="63" r="1.500"/><circle cx="42" cy="72" r="1.500"/><circle cx="288" cy="34" r="1.500" fill="#c22"/><circle cx="174" cy="71" r="1.500"/><circle cx="212" cy="46" r="1.500"/><circle cx="149" cy="57" r="1.500"/><circle cx="200" cy="30" r="1.500"/></g>
              <path d="M5 53h5v5H5z" fill="#f25022"/><path d="M10.500 53h5v5h-5z" fill="#7fba00"/><path d="M5 58.500h5v5H5z" fill="#00a4ef"/><path d="M10.500 58.500h5v5h-5z" fill="#ffb900"/>
              <g font-size="9.500" stroke="#fff" stroke-width="1.500" stroke-opacity=".5" paint-order="stroke"><text x="63" y="56" fill="#111" textLength="193">© 2024 TomTom, © 2024 Microsoft Corporation</text><g fill="#2a4bb8" text-decoration="underline"><text x="265" y="56" textLength="24">Terms</text><text x="184" y="66" textLength="74">© OpenStreetMap</text></g></g>
            </svg>
          </svg>
        </div>
        <!-- Shipping by mode -->
        <div class="mt-[10px] mr-[9px] w-[308px] h-[158px] bg-white border border-[#b9a878]">
          <div class="h-[24px] pl-[5px] bg-[#eb895f] font-['Roboto',sans-serif] font-semibold text-[17px] leading-[21px] text-[#6b007b]"><span class="underline underline-offset-2" data-w="280">Percentage of shipping by Ship Mode</span></div>
          <svg class="w-[306px] h-[132px]" viewBox="1056 667 306 132" font-size="12.500" fill="#605e5c">
            <g fill="none" stroke-width="19.500" transform="rotate(-90 1163.700 730.700)">
              <circle cx="1163.700" cy="730.700" r="38.250" stroke="#118dff" pathLength="100" stroke-dasharray="45.100 54.900"/>
              <circle cx="1163.700" cy="730.700" r="38.250" stroke="#12239e" pathLength="100" stroke-dasharray="23.500 76.500" stroke-dashoffset="-45"/>
              <circle cx="1163.700" cy="730.700" r="38.250" stroke="#e66c37" pathLength="100" stroke-dasharray="23 77" stroke-dashoffset="-68.500"/>
              <circle cx="1163.700" cy="730.700" r="38.250" stroke="#6b007b" pathLength="100" stroke-dasharray="8.600 91.400" stroke-dashoffset="-91.400"/>
            </g>
            <path d="M1144 677h12l2 5M1109 697h11l5 4M1196 694l3-4h12M1149 784h13v-5" fill="none" stroke="#b3b0ad"/>
            <text x="1066" y="682" textLength="74">48.44... (8.6...)</text><text x="1064" y="702" textLength="41">12... (...)</text><text x="1215" y="695" textLength="42">25... (...)</text><text x="1071" y="789" textLength="74">131.9... (23....)</text>
            <text x="1267" y="685" font-size="13" font-weight="700" textLength="70">Ship Mode</text>
            <circle cx="1273.500" cy="702" r="5.300" fill="#118dff"/><circle cx="1273.500" cy="727" r="5.300" fill="#12239e"/><circle cx="1273.500" cy="753.500" r="5.300" fill="#e66c37"/><circle cx="1273.500" cy="779.500" r="5.300" fill="#6b007b"/>
            <g font-size="13"><text x="1281" y="707" textLength="63">Standard...</text><text x="1281" y="732" textLength="59">First Class</text><text x="1281" y="759" textLength="58">Second ...</text><text x="1281" y="784" textLength="60">Same Day</text></g>
          </svg>
        </div>
        <!-- Bottom KPI cards -->
        <div class="mt-[21px] w-[447px] h-[115px] shrink-0 flex text-center font-['Roboto',sans-serif] text-[24px] leading-[28px] text-[#7a3417]">
          <div class="w-[218px] h-[115px] bg-[#e667b9]">
            <div class="h-[28px] pt-px"><span class="underline decoration-2 underline-offset-[4px]" data-w="102">AVERAGE</span></div><div class="h-[28px] pt-px"><span class="underline decoration-2 underline-offset-[4px]" data-w="113">DISCOUNT</span></div>
            <div class="h-[54px] overflow-hidden font-['Inter',sans-serif] font-black text-[62px] leading-[67px] text-[#893395]"><span data-w="142">0.14</span></div>
          </div>
          <div class="w-[229px] h-[115px] bg-[#c8c8c8]">
            <div class="h-[28px] pt-px"><span class="underline decoration-2 underline-offset-[4px]" data-w="183">TOTAL SHIPPING</span></div><div class="h-[28px] pt-px"><span class="underline decoration-2 underline-offset-[4px]" data-w="58">COST</span></div>
            <div class="h-[54px] overflow-hidden font-['Inter',sans-serif] font-black text-[62px] leading-[67px] text-[#893395]"><span data-w="196">1.35M</span></div>
          </div>
        </div>
      </div>
      <svg class="hidden"><symbol id="cd" viewBox="0 0 14 8"><path d="M.5.700L7 7 13.500.700" stroke="#8a8460" stroke-width="1.300" fill="none"/></symbol></svg>
    </div>
    <!-- Page tabs -->
    <div class="h-[44px] flex">
      <div class="ml-[13px] mt-[8px] w-[30px]"><svg class="ml-[2px] w-[25px] h-[20px]" viewBox="0 0 25 20" fill="none" stroke="#605e5c" stroke-width="1.600"><path d="M1 1h23v14H1zM12.500 15v3M8 18.500h9"/></svg><div class="mt-[7px] h-[4px] rounded-full bg-[#117865]"></div></div>
      <svg class="ml-[32px] mt-[6px] w-[16px] h-[26px]" viewBox="0 0 16 26" fill="none" stroke="#605e5c" stroke-width="1.600"><rect x="1" y="1" width="14" height="24" rx="1.500"/><path d="M7 21.500h2"/></svg>
      <svg class="ml-[26px] mt-[16px] w-[6px] h-[11px]" viewBox="0 0 6 11"><path d="M6 0v11L0 5.500z" fill="#c8c6c4"/></svg>
      <svg class="ml-[22px] mt-[16px] w-[6px] h-[11px]" viewBox="0 0 6 11"><path d="M0 0v11l6-5.500z" fill="#c8c6c4"/></svg>
      <div class="ml-[8px] w-[95px] bg-white border-x border-[#c8c6c4] flex justify-center pt-[12px] text-[14px] text-[#252423] shadow-[inset_0_-5px_0_#117865]"><span data-w="43">Page 1</span></div>
      <div class="w-[96px] bg-white border-r border-[#c8c6c4] flex justify-center pt-[12px] text-[14px] text-[#252423]"><span data-w="45">Page 2</span></div>
      <div class="mt-[2px] w-[49px] h-[40px] bg-[#117865] flex justify-center items-center"><svg class="w-[14px] h-[14px]" viewBox="0 0 14 14"><path d="M7 0v14M0 7h14" stroke="#fff" stroke-width="3.400"/></svg></div>
    </div>
  </div>

  <!-- Filters pane -->
  <aside class="w-[41px] bg-white flex flex-col items-center border-l border-[#e1dfdd]">
    <svg class="mt-[16px] w-[16px] h-[16px]" viewBox="0 0 16 16"><use href="#dl"/></svg>
    <svg class="mt-[20px] ml-[4px] w-[15px] h-[15px]" viewBox="0 0 15 15" fill="none" stroke="#252423" stroke-width="1.400"><path d="M14 1v13L9 9.500H1v-4h8z"/></svg>
    <div class="mt-[11px] mr-[1px] [writing-mode:vertical-rl] text-[18px] leading-[24px] font-semibold text-[#252423]"><span class="tracking-[-0.3px]">Filters</span></div>
  </aside>
  <aside class="w-[43px] flex flex-col items-center border-l border-[#e1dfdd]">
    <svg class="mt-[17px] w-[16px] h-[16px]" viewBox="0 0 16 16"><use href="#dl"/></svg>
    <div class="mt-[18px] mr-[5px] [writing-mode:vertical-rl] text-[18px] leading-[24px] font-semibold text-[#252423]"><span class="tracking-[0.2px]">Bookmarks</span></div>
  </aside>

  <!-- Visualizations pane -->
  <aside class="w-[226px] border-l border-[#d9d7d5] flex flex-col relative">
    <div class="mt-[14px] ml-[10px] h-[22px] flex items-center text-[18px] font-semibold text-[#252423]"><span data-w="124">Visualizations</span><svg class="ml-[66px] w-[16px] h-[16px]" viewBox="0 0 16 16"><use href="#dr"/></svg></div>
    <div class="mt-[12px] ml-[10px] text-[14px] text-[#252423] font-medium"><span data-w="77">Build visual</span></div>
    <div class="mt-[4px] ml-[10px] flex h-[40px] items-center">
      <div class="w-[40px] h-[40px] bg-[#d2d0ce] rounded-[2px] flex justify-center items-center"><svg class="w-[31px] h-[31px]" viewBox="0 0 31 31"><path d="M1 1h24" stroke="#252423" stroke-width="1.500"/><path d="M1 7.500h29v8H1zM1 21h29v8H1z" fill="#117865" stroke="#252423" stroke-width="1.400" stroke-dasharray="2 1.500"/></svg></div>
      <svg class="ml-[51px] w-[28px] h-[30px]" viewBox="0 0 28 30" fill="none" stroke="#3b3a39" stroke-width="1.600"><path d="M1 25V12h8V1h7v19M9 12v11M16 9h7v3M1 25h3"/><path d="M27 12L14 25q-3 5-9 4 3-2 4-5 2-3 5-1l12-12z" fill="#f3f2f1"/></svg>
      <svg class="ml-[51px] w-[31px] h-[32px]" viewBox="0 0 31 32" fill="none" stroke="#252423" stroke-width="1.500"><circle cx="13" cy="14" r="12"/><path d="M1 14l7-5 5 4 9-7M7 17v6M11 15v9M15 17v8M19 14v9"/><path d="M22 23l8 8" stroke-width="3.500"/></svg>
    </div>
    <svg class="mt-[5px] w-[225px] h-[12px]" viewBox="0 0 225 12" fill="none" stroke="#8a8886"><path d="M0 10.500h20l10-9 10 9h185"/></svg>
    <div id="visual-grid" class="ml-[10px] mt-[9px] grid grid-cols-6 w-[210px] auto-rows-[35px]"></div>
    <div class="mt-[3px] border-t border-[#d9d7d5] flex h-[403px]">
      <div class="ml-[5px] w-[213px] flex flex-col text-[14px] text-[#252423]">
        <div class="mt-[10px] ml-[10px]"><span data-w="38">Y-axis</span></div>
        <div class="mt-[7px] h-[45px] border border-dashed border-[#c8c6c4] bg-white p-[4px] pr-[3px]"><div class="h-[28px] border border-[#c8c6c4] rounded-[2px] bg-[#edebe9] flex items-center pl-[5px]"><span data-w="46">Region</span><svg class="ml-auto w-[15px] h-[9px]" viewBox="0 0 15 9"><use href="#cb"/></svg><svg class="ml-[7px] mr-[5px] w-[11px] h-[11px]" viewBox="0 0 14 14"><use href="#x"/></svg></div></div>
        <div class="mt-[13px] ml-[10px]"><span data-w="39">X-axis</span></div>
        <div class="mt-[7px] h-[44px] border border-dashed border-[#c8c6c4] bg-white p-[4px] pt-[3px] pr-[3px]"><div class="h-[28px] border border-[#c8c6c4] rounded-[2px] bg-[#edebe9] flex items-center pl-[5px]"><span data-w="66">total sales</span><svg class="ml-auto w-[15px] h-[9px]" viewBox="0 0 15 9"><use href="#cb"/></svg><svg class="ml-[7px] mr-[5px] w-[11px] h-[11px]" viewBox="0 0 14 14"><use href="#x"/></svg></div></div>
        <div class="mt-[14px] ml-[10px]"><span data-w="48">Legend</span></div>
        <div class="mt-[6px] h-[35px] border border-dashed border-[#c8c6c4] bg-white flex items-center pl-[13px]"><span data-w="133">Add data fields here</span></div>
        <div class="mt-[14px] ml-[10px]"><span data-w="100">Small multiples</span></div>
        <div class="mt-[6px] h-[35px] border border-dashed border-[#c8c6c4] bg-white flex items-center pl-[13px]"><span data-w="133">Add data fields here</span></div>
        <div class="mt-[14px] ml-[10px]"><span data-w="51">Tooltips</span></div>
        <div class="mt-[6px] h-[35px] border border-dashed border-[#c8c6c4] bg-white flex items-center pl-[13px]"><span data-w="133">Add data fields here</span></div>
      </div>
      <div class="mt-[2px] w-[7px] h-[243px] rounded-full bg-[#d2d0ce]"></div>
    </div>
  </aside>

  <!-- Data pane -->
  <aside class="w-[226px] border-l border-[#d9d7d5] flex flex-col">
    <div class="mt-[14px] ml-[11px] mr-[10px] h-[22px] flex items-center justify-between text-[18px] font-semibold text-[#252423]"><span data-w="42">Data</span><svg class="w-[16px] h-[16px]" viewBox="0 0 16 16"><use href="#dr"/></svg></div>
    <div class="mt-[21px] ml-[5px] w-[215px] h-[33px] border border-[#8a8886] rounded-[2px] flex items-center text-[15px] text-[#605e5c]">
      <svg class="ml-[9px] w-[19px] h-[19px]" viewBox="0 0 19 19" fill="none" stroke="#605e5c" stroke-width="1.200"><circle cx="12" cy="7" r="6"/><path d="M7.500 11.500L.500 18.500"/></svg>
      <span class="ml-[8px]" data-w="30">AVE</span>
      <svg class="ml-auto mr-[9px] w-[15px] h-[15px]" viewBox="0 0 14 14"><use href="#x"/></svg>
    </div>
    <div class="mt-[17px] h-[20px] flex items-center ml-[9px]">
      <svg class="w-[15px] h-[9px]" viewBox="0 0 15 9"><use href="#cb"/></svg>
      <svg class="ml-[4px] mr-px w-[23px] h-[24px]" viewBox="0 0 23 24" fill="none"><rect x="1" y="1" width="14" height="14" rx="2.500" stroke="#3b3a39" stroke-width="1.500"/><path d="M1 5.500h14M1 10h14M5.500 1v14M10.500 1v14" stroke="#3b3a39" stroke-width="1.200"/><circle cx="15.500" cy="16.500" r="7" fill="#117865"/><path d="M12.500 16.500l2 2 4-4" stroke="#fff" stroke-width="1.600"/></svg>
      <span data-w="44">Orders</span>
    </div>
    <div class="mt-[9px] h-[21px] flex items-center ml-[48px]">
      <i class="size-[15px] border border-[#a19f9d] rounded-[2px]"></i>
      <svg class="ml-[10px] w-[15px] h-[17px]" viewBox="0 0 15 17" fill="none" stroke="#3b3a39" stroke-width="1.300"><rect x=".7" y=".7" width="13.600" height="15.600" rx="2"/><path d="M4 3.500h7v2.500H4z"/><path d="M3.500 9.500h8M3.500 13h8" stroke-width="2" stroke-dasharray="2 1"/></svg>
      <div class="ml-[7px]"><span data-w="112"><b class="font-semibold bg-[#117865] text-white">ave</b>rage discount</span></div>
    </div>
    <div class="mt-[9px] h-[21px] flex items-center ml-[48px]">
      <i class="size-[15px] border border-[#a19f9d] rounded-[2px]"></i>
      <svg class="ml-[10px] w-[17px] h-[16px]" viewBox="0 0 17 16" fill="none" stroke="#3b3a39" stroke-width="1.300"><path d="M6 14.500H1v-13h14V4M1 5h6M1 8h5M1 11h5M5 1.500v13"/><path d="M16 6.500H9l4 4-4 4.500h7" stroke-width="1.500"/></svg>
      <div class="ml-[5px]"><span data-w="87"><b class="font-semibold bg-[#117865] text-white">ave</b>rage sales</span></div>
    </div>
  </aside>
  <svg class="hidden">
    <symbol id="dl" viewBox="0 0 16 16"><path d="M8 .500L1 8l7 7.500M15 .500L8 8l7 7.500" stroke="#252423" stroke-width="1.400" fill="none"/></symbol>
    <symbol id="dr" viewBox="0 0 16 16"><path d="M1 .500L8 8l-7 7.500M8 .500L15 8l-7 7.500" stroke="#252423" stroke-width="1.400" fill="none"/></symbol>
    <symbol id="cb" viewBox="0 0 15 9"><path d="M.500 1l7 7 7-7" stroke="#3b3a39" stroke-width="1.200" fill="none"/></symbol>
    <symbol id="x" viewBox="0 0 14 14"><path d="M1 1l12 12M13 1L1 13" stroke="#3b3a39" stroke-width="1.300" fill="none"/></symbol>
  </svg>
</main>

<!-- Status bar -->
<footer class="h-[30px] shrink-0 border-t border-[#d9d7d5] border-b-[1px] border-b-black flex items-center text-[14px] text-[#484644]">
  <div class="ml-[5px] w-[1412px] pt-[3px]"><span data-w="74">Page 1 of 2</span></div>
  <div class="w-[6px] h-[2px] bg-[#605e5c]"></div>
  <svg class="ml-[4px] w-[125px] h-[14px]" viewBox="0 0 125 14"><path d="M0 7h125" stroke="#605e5c" stroke-width="1.300"/><path d="M62 3v8" stroke="#605e5c"/><path d="M47 0h5v14h-5z" fill="#605e5c"/></svg>
  <svg class="ml-[6px] w-[11px] h-[11px]" viewBox="0 0 11 11"><path d="M5.500 0v11M0 5.500h11" stroke="#484644" stroke-width="1.600"/></svg>
  <div class="ml-[16px] w-[53px]"><span data-w="29">82%</span></div>
  <svg class="w-[20px] h-[16px]" viewBox="0 0 20 16" fill="none" stroke="#605e5c" stroke-width="1.400"><path d="M1 1h18v14H1z"/><path d="M4 6V4h3M13 4h3v2M16 10v2h-3M7 12H4v-2"/></svg>
  <div class="ml-[17px] pt-[3px]"><span data-w="240">Update available (click to download)</span></div>
</footer>

<!-- Taskbar -->
<footer class="h-[60px] shrink-0 bg-[#14293d] text-white flex items-center text-[14px]">
  <svg class="ml-[25px] w-[32px] h-[30px]" viewBox="0 0 32 30"><path d="M19 1q12 6 9 17-5 12-17 9-6-2-8-6 9 1 14-6 4-6 2-14z" fill="#f2a32c"/><path d="M4 12q-4-1-3-5 1-3 4-3 2-4 6-3 4 0 5 5 3 1 2 4t-4 3z" fill="#bcd3f7"/><path d="M18 28q-4-1-3-5 1-3 4-3 2-4 6-2 3 1 4 4 3 1 2 4-1 2-3 2z" fill="#d4e2fb"/></svg>
  <div class="ml-[8px] w-[606px] leading-[20px] pt-[1px]"><div><span data-w="32">26°C</span></div><div class="text-[#c9d0d6]"><span data-w="87">Partly cloudy</span></div></div>
  <svg class="w-[29px] h-[29px]" viewBox="0 0 29 29"><defs><linearGradient id="w" x2="1" y2="1"><stop stop-color="#8ce4ff"/><stop offset="1" stop-color="#0f9cf5"/></linearGradient></defs><path d="M0 0h14v14H0zM15 0h14v14H15zM0 15h14v14H0zM15 15h14v14H15z" fill="url(#w)"/></svg>
  <svg class="ml-[27px] w-[28px] h-[29px]" viewBox="0 0 28 29"><circle cx="16" cy="12" r="10" fill="#3d4f5f" stroke="#e8ecef" stroke-width="2.600"/><path d="M9 19.500L2 27" stroke="#e8ecef" stroke-width="3.200" stroke-linecap="round"/></svg>
  <svg class="ml-[26px] w-[31px] h-[29px]" viewBox="0 0 31 29"><path d="M10 1h20v20H10z" fill="#f3f3f3"/><path d="M0 8h22v19H0z" fill="#77797c" fill-opacity=".9"/></svg>
  <svg class="ml-[24px] w-[29px] h-[29px]" viewBox="0 0 29 29"><path d="M1 28l2-7A14 14 0 1 1 15 28z" fill="#6558c8"/><path d="M14.500 0A14 14 0 0 1 28 16L4 8A14 14 0 0 1 14.500 0z" fill="#8975dd"/><path d="M6 9h12v11H6zM19 13l5-3v9l-5-3z" fill="#fff"/></svg>
  <svg class="ml-[25px] w-[31px] h-[30px]" viewBox="0 0 31 30"><circle cx="15.500" cy="15" r="14.800" fill="#127cd4"/><path d="M1 13A14.500 14.500 0 0 1 30 15q0 6-8 7-5 0-4-4 2-9-7-9-6 0-10 4z" fill="#3dcbb1"/><path d="M19 1q12 5 11 15-1 5-8 6 4-12-3-21z" fill="#5fdf5a"/><path d="M15 12q-5 8 2 14 5 1 9-2-6 7-14 5-9-4-5-13 3-5 8-4z" fill="#0a4b98"/><path d="M19 14q-4 8 11 6-3 4-8 4-8-2-6-9z" fill="#14293d"/></svg>
  <div class="ml-[24px] w-[31px] h-[50px] flex flex-col items-center"><svg class="mt-[11px] w-[31px] h-[28px]" viewBox="0 0 31 28"><path d="M0 1h11l3 4h16v10H0z" fill="#e5a50a"/><path d="M0 7h31v18H0z" fill="#ffcf48"/><path d="M7 18h17v8H7z" fill="#1082d6"/><path d="M11 21h9v5h-9z" fill="#0a5ea8"/></svg><i class="mt-[4px] w-[7px] h-[4px] rounded-full bg-[#9aa3ab]"></i></div>
  <div class="ml-[25px] w-[29px] h-[50px] flex flex-col items-center"><svg class="mt-[9px] w-[29px] h-[30px]" viewBox="0 0 29 30"><path d="M8 7V2h13v5" fill="none" stroke="#2ab3ee" stroke-width="2.200"/><path d="M0 6h29v20q0 4-4 4H4q-4 0-4-4z" fill="#f4f4f4"/><path d="M9 12h5v5H9z" fill="#f25022"/><path d="M15 12h5v5h-5z" fill="#7fba00"/><path d="M9 18h5v5H9z" fill="#00a4ef"/><path d="M15 18h5v5h-5z" fill="#ffb900"/></svg><i class="mt-[4px] w-[7px] h-[4px] rounded-full bg-[#9aa3ab]"></i></div>
  <div class="ml-[26px] w-[30px] h-[50px] flex flex-col items-center"><svg class="mt-[9px] w-[30px] h-[30px]" viewBox="0 0 30 30"><ellipse cx="15" cy="15" rx="14.500" ry="15" fill="#ee1c2e"/><path d="M20 3q9 3 9.500 12T20 27q4-5 4-12T20 3z" fill="#ff5a5f"/><ellipse cx="15" cy="15" rx="7" ry="11" fill="#14293d"/></svg><i class="mt-[4px] w-[30px] h-[4px] rounded-full bg-[#ff9aa2]"></i></div>
  <svg class="ml-[25px] w-[30px] h-[30px]" viewBox="0 0 30 30"><circle cx="15" cy="15" r="15" fill="#2da94f"/><path d="M2 7.500A15 15 0 0 1 28 7.500H15L9 18z" fill="#ea4335"/><path d="M28 7.500A15 15 0 0 1 15 30l6.500-11.500V7.500z" fill="#fdbd00"/><circle cx="15" cy="15" r="7.500" fill="#fff"/><circle cx="15" cy="15" r="5.800" fill="#3b7ded"/></svg>
  <div class="ml-[15px] w-[49px] h-[50px] rounded-[5px] bg-[#26394c] border border-[#33465a] flex flex-col items-center"><svg class="mt-[9px] w-[24px] h-[30px]" viewBox="0 0 24 30"><rect x="12" width="12" height="30" rx="1.500" fill="#d99a0a"/><rect x="6" y="7" width="11" height="23" rx="1.500" fill="#efb92a"/><rect y="15" width="10" height="15" rx="1.500" fill="#f9d65a"/></svg><i class="mt-[4px] w-[20px] h-[4px] rounded-full bg-[#5cc8f8]"></i></div>
  <div class="ml-[18px] w-[27px] h-[50px] flex flex-col items-center"><svg class="mt-[11px] w-[26px] h-[27px]" viewBox="0 0 26 27"><rect width="26" height="27" rx="3" fill="#1573cf"/><path d="M0 22L11 10q2-2 4 0l11 14q0 3-3 3H3q-3 0-3-3z" fill="#3fd0f0"/><path d="M13 17l10 10H5z" fill="#1b6fc0"/><circle cx="19" cy="5" r="2.500" fill="#fff"/></svg><i class="mt-[5px] w-[7px] h-[4px] rounded-full bg-[#9aa3ab]"></i></div>
  <svg class="ml-[322px] w-[16px] h-[9px]" viewBox="0 0 16 9"><path d="M1 8l7-7 7 7" stroke="#fff" stroke-width="1.400" fill="none"/></svg>
  <svg class="ml-[11px] w-[21px] h-[18px]" viewBox="0 0 21 18"><path d="M5 14q-5-1-4-5 1-3 4-4 2-5 7-4 5 1 5 6 3 1 3 4 0 3-3 3z" fill="#aeb3b8"/><circle cx="15" cy="12" r="5.500" fill="#3db1f2"/><path d="M15 11v4M15 8.500v1" stroke="#fff" stroke-width="1.500"/></svg>
  <div class="ml-[18px] w-[31px] flex flex-col items-center leading-[20px]"><span data-w="29">ENG</span><span data-w="15">IN</span></div>
  <svg class="ml-[20px] w-[21px] h-[16px]" viewBox="0 0 21 16" fill="none" stroke="#fff" stroke-width="1.400"><path d="M1 6q9.500-9 19 0M4 9q6.500-6 13 0M7 12q3.500-3.500 7 0"/><circle cx="10.500" cy="14" r="1.200" fill="#fff"/></svg>
  <svg class="ml-[8px] w-[21px] h-[16px]" viewBox="0 0 21 16" fill="none" stroke="#fff" stroke-width="1.300"><path d="M1 5.500h3.500L9 1v14l-4.500-4.500H1zM12 5q2 3 0 6M14.500 3q4 5 0 10"/><path d="M17 1q6 7 0 14" stroke="#7b8792"/></svg>
  <svg class="ml-[10px] w-[21px] h-[14px]" viewBox="0 0 21 14" fill="none" stroke="#fff" stroke-width="1.500"><rect x="1" y="1" width="16" height="12" rx="2.500"/><path d="M19 5v4"/><path d="M3.500 3.500h4v7h-4z" fill="#fff" stroke="none"/></svg>
  <div class="ml-[18px] w-[79px] flex flex-col items-end leading-[20px]"><span data-w="36">09:35</span><span data-w="78">09-03-2024</span></div>
  <div class="ml-[8px] size-[20px] rounded-full bg-[#5cc8f8] text-[#10202f] text-[12px] leading-[20px] text-center">2</div>
</footer>

<script>
// Icons of the visual picker, drawn on a 24 x 24 grid
const K = '#3b3a39', B = '#1267b4', L = '#83beec', G = '#c8c6c4', H = '#8a8886', W = '#fff';
const p = (d, s = K, f = 'none', w = 1.5) => `<path d="${d}" stroke="${s}" fill="${f}" stroke-width="${w}"/>`;
const r = (x, y, w, h, s = K, f = W) => `<rect x="${x}" y="${y}" width="${w}" height="${h}" stroke="${s}" fill="${f}" stroke-width="1.4"/>`;
const t = (x, y, s, size, f) => `<text x="${x}" y="${y}" font-size="${size}" fill="${f}">${s}</text>`;
const ax = p('M1 0v22.500h23');
const bolt = p('M3 -1h7l-3 5h3L1 13l2-7H-1z', '#d8730c', '#fbd38d', 1.3);
const card = r(1, 3, 22, 17);
const funnel = p('M12 13h12l-4 5v6h-4v-6z', K, W);
const slicer = r(1, 1, 22, 20, K, W) + r(1, 1, 22, 3, H, G) + r(5, 8, 4, 4, H, G) + r(5, 15, 4, 4, H, G) + funnel;
const icons = [
  r(2, 3, 6, 5) + r(7, 3, 8, 5, B, L) + r(2, 14, 10, 5, H) + r(11, 14, 9, 5, H, G) + ax,
  r(4, 14, 6, 8) + r(4, 7, 6, 8, B, L) + r(15, 11, 6, 11) + r(15, 3, 6, 9, H, G) + ax,
  r(1, 1, 22, 5, B, L) + r(1, 6, 14, 5) + r(1, 11, 10, 5, H, G) + r(1, 16, 17, 5) + ax,
  r(3, 1, 5, 21, B, L) + r(8, 10, 4, 12) + r(12, 13, 5, 9, H, G) + r(17, 7, 5, 15) + ax,
  r(3, 3, 18, 5, B, L) + r(2, 14, 12, 5) + r(13, 14, 7, 5, H, G) + ax,
  r(5, 2, 5, 16, B, L) + r(5, 17, 5, 5) + r(16, 2, 5, 9, H, G) + r(16, 10, 5, 12) + ax,
  p('M2 18l7-9 3 3 4-7 7 7', B) + p('M2 13l6-6 7 6 8-9') + ax,
  p('M1 22L8 3l8 19z', K, W) + p('M10 22L18 1l5 14v7z', H, G) + p('M1 22v-6l4 3 8-8 10 11z', B, L),
  p('M1 3l8 6 8-6 6 4v11l-6-4-6 3-10-7z', B, L) + ax,
  r(5, 1, 5, 21, B, L) + r(16, 2, 5, 20, H, G) + r(5, 16, 5, 6) + p('M1 20l9-9 5 6 8-8') + ax,
  r(4, 9, 6, 13, B, L) + r(10, 1, 5, 21) + r(15, 6, 6, 16, H, G) + p('M1 20l8-8 6 5 8-9') + ax,
  p('M2 4q7 6 11 2t10-2v8q-5-2-9 2T2 10z', H, G) + p('M2 12h21v7H2z', '#d8730c', '#fbd38d') + p('M2 9q5-1 8 4t13-4v4q-5 0-8 5T2 13z', B, L) + ax,
  r(4, 7, 5, 15) + r(9, 7, 3, 7, H, G) + r(12, 2, 4, 12, B, L) + r(16, 1, 6, 21) + ax,
  r(1, 2, 22, 6, B, L) + r(4, 8, 16, 6, B, L) + r(8, 14, 9, 7, B, L),
  r(17, 1, 3, 3, K, K) + r(5, 16, 3, 3, K, K) + r(4, 5, 3, 3, B, L) + r(11, 9, 3, 3, B, L) + r(17, 14, 3, 3, B, L) + ax,
  `<circle cx="12" cy="12" r="11" fill="#fff" stroke="${K}" stroke-width="1.500"/>` + p('M12 1a11 11 0 0 1 8 19l-8-8z', B, L),
  `<circle cx="12" cy="12" r="8.300" fill="none" stroke="${B}" stroke-width="6.800"/><circle cx="12" cy="12" r="8.300" fill="none" stroke="${L}" stroke-width="4"/>` + p('M12 1v6q-4 0-5 4H1Q2 3 12 1z', H, W) + '<circle cx="12" cy="12" r="5" fill="none" stroke="#3b3a39" stroke-width="1.500"/>',
  r(1, 1, 10, 11, B, L) + r(1, 12, 10, 11, B, L) + r(11, 1, 12, 6) + r(11, 7, 6, 16) + r(17, 7, 6, 8) + r(17, 15, 6, 8),
  `<circle cx="12" cy="10" r="7" fill="#fff" stroke="${K}" stroke-width="1.500"/>` + p('M8 6l4-1 1 4-3 2-3-2zM14 9l4-1v4l-3 3-2-3z', '#2e9b4f', '#2e9b4f', 1) + p('M9 0Q1 3 2 11t10 9q7 0 9-6M12 20v3M4 23h16'),
  p('M1 2l5 2 6-2 5 2 6-2v13l-6 2-4 5-6-4-5-2-1-8z', K, G) + p('M1 2l5 2 6-2v9H1zM11 11h11v4l-6 2-4 5-2-5z', B, L),
  '<path d="M14 0L1 22l13-7z" fill="#4db3de"/><path d="M14 0v15l7 9z" fill="#1d78c1"/>',
  p('M1 16A11 11 0 0 1 23 16h-6a5 5 0 0 0-10 0z', K, W) + p('M10 5Q21 4 23 16h-6q-1-4-5-5z', B, L) + p('M11 16l5-6', K, 'none', 2.5),
  card + t(3, 14, '123', 10, B) + p('M4 17h16', H),
  r(1, 1, 22, 22) + p('M5 5v14', H) + p('M7 7h13M7 14h13', B, 'none', 2) + p('M7 10h6M7 18h6', H),
  card + p('M4 12l3-6 4 6z', '#2e9b4f', '#2e9b4f', 1) + p('M12 6h8l-4 6z', '#d13438', '#e06060', 1) + p('M4 16h16', H),
  slicer,
  r(1, 1, 22, 22) + r(1, 1, 22, 4, K, G) + p('M1 11h22M1 17h22M8 5v18M16 5v18', H),
  r(1, 1, 22, 22) + r(1, 1, 22, 4, K, G) + p('M15 5h8v18H1v-6h14z', B, L) + p('M1 11h22M1 17h22M8 5v18M15 5v18', B),
  `<text x="4" y="19" font-size="20" font-weight="700" fill="#1e87c7" textLength="13">R</text>`,
  `<text x="-1" y="18" font-size="20" font-weight="600" fill="#1e87c7" textLength="24">Py</text>`,
  p('M1 5h16', B) + '<circle cx="19" cy="5" r="3" fill="#83beec" stroke="#1267b4" stroke-width="1.400"/>' + p('M1 11h11M1 17h6', H) + '<circle cx="14" cy="11" r="1.800" fill="#fff" stroke="#605e5c"/><circle cx="9" cy="17" r="1.800" fill="#fff" stroke="#605e5c"/>' + ax,
  p('M8 12h8M12 12V3h4M12 12v9h4') + r(0, 9, 8, 6, B, L) + r(15, 1, 8, 6, B, L) + r(15, 9, 8, 6, B, L) + r(15, 17, 8, 6, B, L),
  p('M1 2h22v15H11l-6 5v-5H1z', B, W),
  p('M3 1h14l5 5v17H3zM16 1v6h6', K, W) + '<circle cx="3" cy="10" r="2.500" fill="#83beec" stroke="#1267b4"/>' + p('M9 11h9M6 16h7', '#4aa0dc'),
  p('M6 1h12v8q0 6-6 6T6 9zM6 4H1q0 7 6 7M18 4h5q0 7-6 7M12 15v4', K, W) + p('M6 1h12v3H6zM8 19h8v4H8z', B, L),
  p('M3 0h12l6 6v18H3zM14 0v7h7', K, W) + p('M7.500 14v8M12 17v5M17 11v11', K, K, 3),
  card + t(4.5, 15, '123', 9.5, B) + p('M4 17h16', H) + bolt,
  slicer + bolt,
  '<circle cx="12" cy="12" r="11.500" fill="#e8e6e4" stroke="#a19f9d"/><circle cx="12" cy="12" r="8.500" fill="#1d78c1"/>' + p('M7 7l4 2-1 4-4 1zM15 12l5-1-2 5-4 2z', '#3fae5a', '#3fae5a', 1) + p('M4 9q8 4 16-1M4 15q8-4 16 1M10 3q-4 9 1 18M15 4q4 8-1 16', '#e8e6e4', 'none', 1),
  p('M7 1h10l6 11-6 11H7L1 12zM7 1l10 11-5 5-5-5L17 1M7 12l5-5 5 5-10 11M17 23L7 12', '#8a3a9c', 'none', 1.4),
  p('M1 2h15l7 10-7 10H1l7-10zM7 22L20 7M12 22l9-8M8 12l9-9', '#2a7de1', 'none', 1.5),
  '<g fill="#3b3a39"><circle cx="4" cy="9" r="1"/><circle cx="12" cy="9" r="1"/><circle cx="20" cy="9" r="1"/></g>'
];
document.getElementById('visual-grid').innerHTML = icons.map((inner, i) =>
  `<div class="${i ? 'w-[30px] h-[30px] flex justify-center items-center' : 'w-[30px] h-[30px] flex justify-center items-center border border-[#605e5c] bg-[#e1dfdd]'}"><svg class="w-[24px] h-[24px] overflow-visible" viewBox="0 0 24 24">${inner}</svg></div>`).join('');

// Track each label to its set width; repeated once styles and fonts have settled
function fitLabels() {
  const labels = [...document.querySelectorAll('[data-w]')];
  labels.forEach(el => {
    el.style.display = 'inline-block';
    el.style.letterSpacing = '0px';
    el.style.marginRight = '0px';
  });
  const widths = labels.map(el => {
    const range = document.createRange();
    range.selectNodeContents(el);
    return range.getBoundingClientRect().width;
  });
  labels.forEach((el, i) => {
    const spacing = (el.dataset.w - widths[i]) / (el.textContent.length - 1);
    el.style.letterSpacing = spacing + 'px';
    el.style.marginRight = -spacing + 'px';
  });
}
fitLabels();
window.addEventListener('load', fitLabels);
document.fonts.ready.then(fitLabels);
[0, 30, 100, 250, 500].forEach(ms => setTimeout(fitLabels, ms));
</script>
</body>
</html>
